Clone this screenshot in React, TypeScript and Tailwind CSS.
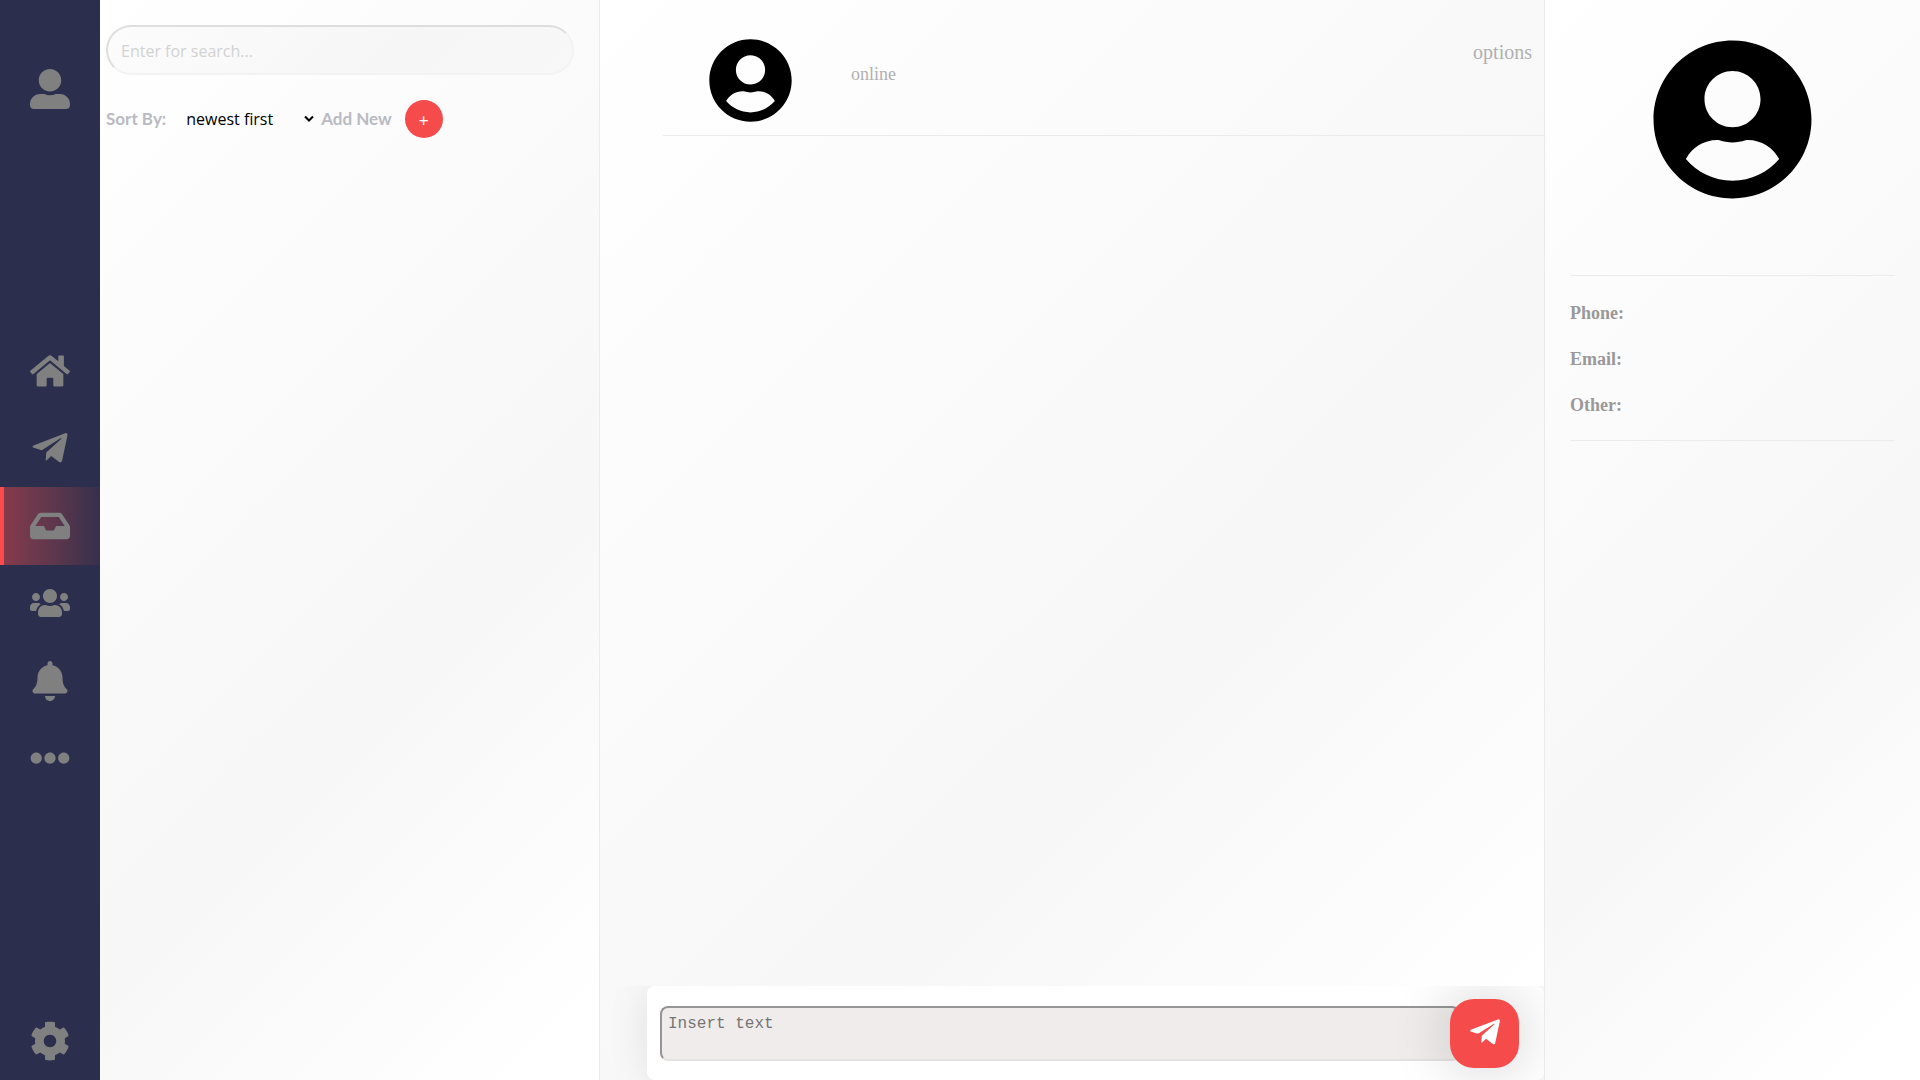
import React from "react";
import {
  FaBell,
  FaCog,
  FaEllipsisH,
  FaHome,
  FaInbox,
  FaTelegramPlane,
  FaUserAlt,
  FaUserCircle,
  FaUsers,
} from "react-icons/fa";
import type { IconType } from "react-icons";

const navItems: { label: string; icon: IconType; active?: boolean }[] = [
  { label: "Home", icon: FaHome },
  { label: "Send", icon: FaTelegramPlane },
  { label: "Inbox", icon: FaInbox, active: true },
  { label: "Contacts", icon: FaUsers },
  { label: "Notifications", icon: FaBell },
  { label: "More", icon: FaEllipsisH },
];

function NavButton({ label, icon: Icon, active }: { label: string; icon: IconType; active?: boolean }) {
  return (
    <button
      type="button"
      aria-label={label}
      className={
        active
          ? "relative flex min-h-[77px] w-full flex-1 items-center justify-center bg-linear-to-r from-[#8a3a4b] to-[#36304c] text-[#808080] before:absolute before:inset-y-0 before:left-0 before:w-1 before:bg-[#fc4b4b]"
          : "flex min-h-[77px] w-full flex-1 items-center justify-center text-[#808080]"
      }
    >
      <Icon className="size-10" />
    </button>
  );
}

function Sidebar() {
  return (
    <aside className="flex w-[100px] shrink-0 flex-col justify-between bg-[#2b2e4c] pt-[50px] pb-px">
      <div className="flex">
        <NavButton label="Profile" icon={FaUserAlt} />
      </div>
      <nav className="flex h-[465px] flex-col">
        {navItems.map((item) => (
          <NavButton key={item.label} {...item} />
        ))}
      </nav>
      <div className="flex">
        <NavButton label="Settings" icon={FaCog} />
      </div>
    </aside>
  );
}

function ContactList() {
  return (
    <section className="w-[500px] shrink-0 border-r border-[#ebebeb] bg-linear-[135deg,#ffffff,#f7f7f7_62%,#ffffff_95%] pt-[25px] pl-[6px]">
      <input
        type="text"
        aria-label="Search"
        placeholder="Enter for search..."
        className="block h-[50px] w-[468px] rounded-[25px] border-2 border-t-[#dedede] border-r-[#f3f3f3] border-b-[#f3f3f3] border-l-[#dedede] bg-linear-[135deg,#fcfcfc,#f6f6f6_62%,#f8f8f8] px-[13px] pt-px font-['Open_Sans',sans-serif] text-base text-gray-500 placeholder:text-[#d2d2d2] focus:outline-none"
      />
      <div className="mt-[25px] flex h-[38px] items-center font-['Lato',sans-serif] text-[17px] font-bold text-[#b9bac2]">
        <label htmlFor="sort">Sort By:</label>
        <div className="relative ml-3 flex items-center">
          <select
            id="sort"
            className="w-[141px] appearance-none bg-transparent px-2 font-['Open_Sans',sans-serif] text-base font-normal text-black"
          >
            <option>newest first</option>
          </select>
          <svg className="pointer-events-none absolute right-1 h-2 w-3" viewBox="0 0 12 8" fill="none" stroke="#000" strokeWidth="2">
            <path d="M2 1.5 6 5.5 10 1.5" />
          </svg>
        </div>
        <span className="ml-[2px]">Add New</span>
        <button
          type="button"
          aria-label="Add new"
          className="ml-[13px] flex size-[38px] items-center justify-center rounded-full bg-[#f64b4b] pt-px font-['Open_Sans',sans-serif] text-lg font-normal text-white"
        >
          +
        </button>
      </div>
    </section>
  );
}

function Chat() {
  return (
    <main className="flex min-w-0 flex-1 flex-col border-r border-[#ece9e6] bg-linear-[135deg,#ffffff,#f7f7f7_62%,#ffffff_95%]">
      <header className="ml-[63px] flex h-[136px] items-start border-b border-[#ebebeb] font-['Liberation_Serif',serif] text-[#b0b0b0]">
        <FaUserCircle className="mt-[38px] ml-[45px] size-[85px] text-black" />
        <span className="mt-[62px] ml-[58px] text-lg leading-6">online</span>
        <button type="button" className="mt-10 mr-3 ml-auto text-xl leading-6">
          options
        </button>
      </header>
      <div className="flex-1" />
      <div className="overflow-hidden pl-[47px]">
        <form className="flex h-[94px] items-start rounded-lg bg-white pt-5 pl-[13px] shadow-[0_0_40px_rgba(0,0,0,0.1)]">
          <textarea
            aria-label="Message"
            placeholder="Insert text"
            className="h-[55px] min-w-0 flex-1 resize-none rounded-lg border-2 border-t-[#959595] border-r-[#e2e0e0] border-b-[#e2e2e0] border-l-[#959595] bg-[#f0ecec] px-[6px] py-1 font-['Liberation_Mono',monospace] text-base text-gray-700 placeholder:text-[#757575] focus:outline-none"
          />
          <button
            type="button"
            aria-label="Send message"
            className="-mt-[7px] mr-[25px] -ml-[10px] flex size-[69px] shrink-0 items-center justify-center rounded-3xl bg-[#f64b4b] pb-1 text-white shadow-[0_0_60px_rgba(0,0,0,0.2)]"
          >
            <FaTelegramPlane className="size-[34px]" />
          </button>
        </form>
      </div>
    </main>
  );
}

function ContactInfo() {
  return (
    <aside className="w-[375px] shrink-0 bg-linear-[135deg,#ffffff,#f7f7f7_62%,#ffffff_95%] px-[25px] pt-[38px] font-['Liberation_Serif',serif]">
      <FaUserCircle className="mx-auto size-[163px] text-black" />
      <dl className="mt-[74px] border-y border-[#ebebeb] pt-[25px] text-lg leading-6 font-bold text-[#999999]">
        <dt className="mb-[22px]">Phone:</dt>
        <dt className="mb-[22px]">Email:</dt>
        <dt className="mb-[23px]">Other:</dt>
      </dl>
    </aside>
  );
}

export default function App() {
  return (
    <div className="flex h-screen w-full overflow-hidden bg-white">
      <Sidebar />
      <ContactList />
      <Chat />
      <ContactInfo />
    </div>
  );
}
